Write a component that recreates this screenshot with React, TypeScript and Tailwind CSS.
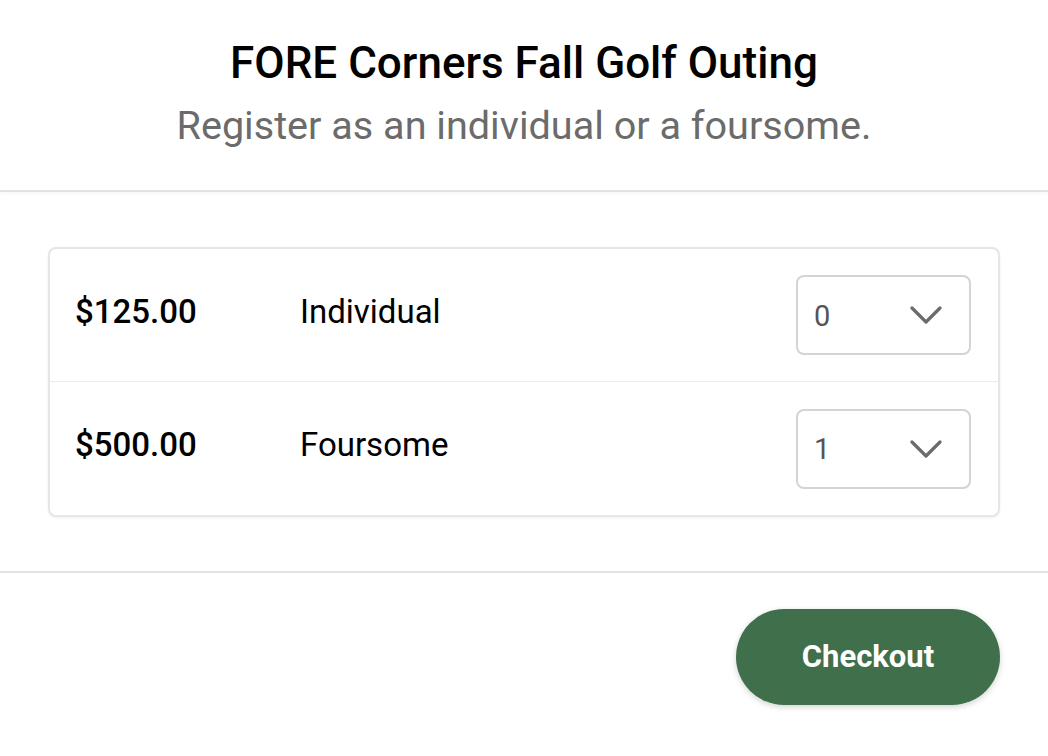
import React from "react";

function Chevron() {
  return (
    <svg width="32" height="18" viewBox="0 0 32 18" fill="none" className="shrink-0">
      <path d="M2 2 L16 16 L30 2" stroke="#6b6b6b" strokeWidth="3.2" strokeLinecap="round" strokeLinejoin="round" />
    </svg>
  );
}

function QtySelect({ value }: { value: string }) {
  return (
    <div className="flex h-[80px] w-[175px] items-center justify-between rounded-[8px] border-2 border-[#d4d4d4] bg-white pl-[16px] pr-[27px]">
      <span className="text-[29px] leading-none text-[#555555] pt-[2px]">{value}</span>
      <Chevron />
    </div>
  );
}

function Row({ price, label, qty, last }: { price: string; label: string; qty: string; last?: boolean }) {
  return (
    <div className={"flex h-[133px] items-center pl-[25px] pr-[27px] " + (last ? "" : "border-b border-[#ececec]")}>
      <div className="w-[225px] pb-[8px] text-[33px] font-medium leading-none text-black">{price}</div>
      <div className="flex-1 pb-[8px] text-[33px] leading-none text-black">{label}</div>
      <QtySelect value={qty} />
    </div>
  );
}

export default function App() {
  return (
    <div className="h-[756px] w-[1048px] bg-white font-[family-name:Roboto,sans-serif]">
      <header className="flex flex-col items-center pt-[37px] pb-[40px]">
        <h1 className="text-[44px] font-medium leading-[52px] text-black">FORE Corners Fall Golf Outing</h1>
        <p className="mt-[13px] text-[39.6px] leading-[48px] text-[#6b6b6b]">Register as an individual or a foursome.</p>
      </header>
      <div className="h-[2px] bg-[#e2e2e2] shadow-[0_2px_3px_rgba(0,0,0,0.04)]" />
      <main className="px-[48px] pt-[55px] pb-[54px]">
        <div className="overflow-hidden rounded-[8px] border-2 border-[#e6e6e6] bg-white shadow-[0_1px_3px_rgba(0,0,0,0.06)]">
          <Row price="$125.00" label="Individual" qty="0" />
          <Row price="$500.00" label="Foursome" qty="1" last />
        </div>
      </main>
      <div className="h-[2px] bg-[#e2e2e2]" />
      <footer className="flex justify-end px-[48px] pt-[36px]">
        <button className="flex h-[96px] w-[264px] items-center justify-center rounded-full bg-[#3f6f4b] text-[31px] font-bold text-white shadow-[0_2px_6px_rgba(0,0,0,0.18)]">
          Checkout
        </button>
      </footer>
    </div>
  );
}
